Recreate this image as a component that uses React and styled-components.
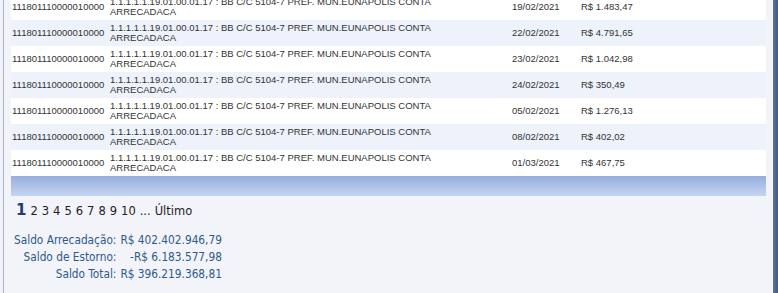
import React from "react";
import styled, { createGlobalStyle } from "styled-components";

const Global = createGlobalStyle`
  html, body { margin: 0; padding: 0; }
  body { background: #f3f3fa; overflow: hidden; }
`;

const Frame = styled.div`
  display: flex;
  height: 293px;
  background: #f3f3fa;
`;

const LeftEdge = styled.div`
  width: 3px;
  border-right: 1px solid #a9b3c9;
  background: #f1f1f8;
`;

const Content = styled.div`
  flex: 1;
  padding: 0 6px 0 7px;
  display: flex;
  flex-direction: column;
  overflow: hidden;
`;

const RightBar = styled.div`
  width: 5px;
  border-left: 1px solid #fbf7fb;
  background: linear-gradient(to right, #5a729c, #41598a);
`;

const Table = styled.table`
  margin-top: -6px;
  width: 100%;
  border-collapse: collapse;
  font-family: "Liberation Sans", Arial, sans-serif;
  font-size: 9.5px;
  color: #333;
`;

const Row = styled.tr`
  height: 26px;
  background: ${(p) => (p.$alt ? "#edf2fb" : "#ffffff")};
`;

const Cell = styled.td`
  padding: 0 0 0 ${(p) => p.$pl || 1}px;
  width: ${(p) => p.$w || "auto"};
  vertical-align: middle;
  line-height: 10px;
  white-space: ${(p) => (p.$wrap ? "normal" : "nowrap")};
`;

const FootRow = styled.tr`
  height: 20px;
  background: linear-gradient(to bottom, #97aedd, #c3d5f2);
  td { padding: 0; }
`;

const Pager = styled.div`
  display: flex;
  align-items: baseline;
  gap: 4px;
  padding: 5px 0 0 5px;
  font-family: Tahoma, "DejaVu Sans", sans-serif;
  font-size: 11.5px;
  color: #222;
`;

const Current = styled.span`
  font-weight: bold;
  font-size: 15px;
  color: #1d3f6e;
`;

const Saldos = styled.div`
  display: grid;
  grid-template-columns: auto auto;
  justify-content: start;
  column-gap: 4px;
  margin: 13px 0 0 3px;
  font-family: "DejaVu Sans Condensed", "DejaVu Sans", sans-serif;
  font-stretch: semi-condensed;
  font-size: 11.75px;
  color: #2c5b8c;
  line-height: 17px;
`;

const Label = styled.span`
  text-align: right;
`;

const Value = styled.span`
  text-align: right;
`;

const rows = [
  ["19/02/2021", "R$ 1.483,47"],
  ["22/02/2021", "R$ 4.791,65"],
  ["23/02/2021", "R$ 1.042,98"],
  ["24/02/2021", "R$ 350,49"],
  ["05/02/2021", "R$ 1.276,13"],
  ["08/02/2021", "R$ 402,02"],
  ["01/03/2021", "R$ 467,75"],
];

const saldos = [
  ["Saldo Arrecadação:", "R$ 402.402.946,79"],
  ["Saldo de Estorno:", "-R$ 6.183.577,98"],
  ["Saldo Total:", "R$ 396.219.368,81"],
];

export default function App() {
  return (
    <>
      <Global />
      <Frame>
        <LeftEdge />
        <Content>
          <Table>
            <tbody>
              {rows.map(([d, v], i) => (
                <Row key={i} $alt={i % 2 === 1}>
                  <Cell $w="97px">111801110000010000</Cell>
                  <Cell $w="401px" $wrap>
                    1.1.1.1.1.19.01.00.01.17 : BB C/C 5104-7 PREF. MUN.EUNAPOLIS CONTA
                    <br />
                    ARRECADACA
                  </Cell>
                  <Cell $w="68px" $pl={1}>{d}</Cell>
                  <Cell $pl={0}>{v}</Cell>
                </Row>
              ))}
              <FootRow>
                <td colSpan={4} />
              </FootRow>
            </tbody>
          </Table>
          <Pager>
            <Current>1</Current>
            <span>2</span>
            <span>3</span>
            <span>4</span>
            <span>5</span>
            <span>6</span>
            <span>7</span>
            <span>8</span>
            <span>9</span>
            <span>10</span>
            <span>...</span>
            <span>Último</span>
          </Pager>
          <Saldos>
            {saldos.map(([l, v]) => (
              <React.Fragment key={l}>
                <Label>{l}</Label>
                <Value>{v}</Value>
              </React.Fragment>
            ))}
          </Saldos>
        </Content>
        <RightBar />
      </Frame>
    </>
  );
}
